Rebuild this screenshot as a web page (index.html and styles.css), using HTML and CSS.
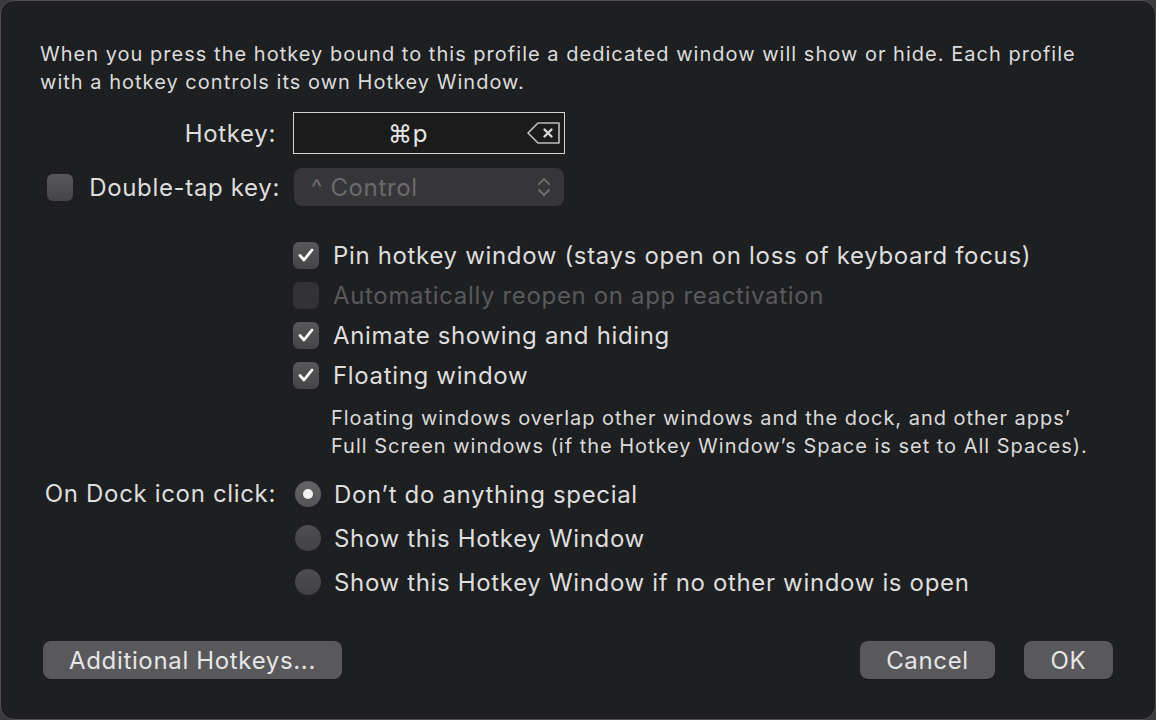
FILE: index.html
```html
<!DOCTYPE html>
<html>
<head>
<meta charset="utf-8">
<link rel="stylesheet" href="styles.css">
</head>
<body>
<div class="window">
  <p class="desc">When you press the hotkey bound to this profile a dedicated window will show or hide. Each profile with a hotkey controls its own Hotkey Window.</p>

  <div class="form">
    <div class="label">Hotkey:</div>
    <div class="ctrl">
      <div class="hotkey-field">
        <span class="hotkey-text">⌘p</span>
        <svg class="del" width="36" height="24" viewBox="0 0 36 24">
          <path d="M12 2 H33 V22 H12 L2 12 Z" fill="none" stroke="#bdbdbd" stroke-width="1.6" stroke-linejoin="round"/>
          <path d="M18.5 8.5 L25.5 15.5 M25.5 8.5 L18.5 15.5" stroke="#d8d8d8" stroke-width="2.4" stroke-linecap="round"/>
        </svg>
      </div>
    </div>

    <div class="label dt">
      <span class="box"></span>
      <span>Double-tap key:</span>
    </div>
    <div class="ctrl">
      <div class="popup">
        <span>^ Control</span>
        <svg width="16" height="24" viewBox="0 0 16 24">
          <path d="M3 9 L8 4 L13 9 M3 15 L8 20 L13 15" fill="none" stroke="#6c6c6e" stroke-width="2" stroke-linecap="round" stroke-linejoin="round"/>
        </svg>
      </div>
    </div>
  </div>

  <div class="checks">
    <div class="check-row"><span class="box on"><svg width="18" height="16" viewBox="0 0 18 16"><path d="M3 8.5 L7 13 L15 3" fill="none" stroke="#fff" stroke-width="2.8" stroke-linecap="round" stroke-linejoin="round"/></svg></span><span>Pin hotkey window (stays open on loss of keyboard focus)</span></div>
    <div class="check-row disabled"><span class="box off"></span><span>Automatically reopen on app reactivation</span></div>
    <div class="check-row"><span class="box on"><svg width="18" height="16" viewBox="0 0 18 16"><path d="M3 8.5 L7 13 L15 3" fill="none" stroke="#fff" stroke-width="2.8" stroke-linecap="round" stroke-linejoin="round"/></svg></span><span>Animate showing and hiding</span></div>
    <div class="check-row"><span class="box on"><svg width="18" height="16" viewBox="0 0 18 16"><path d="M3 8.5 L7 13 L15 3" fill="none" stroke="#fff" stroke-width="2.8" stroke-linecap="round" stroke-linejoin="round"/></svg></span><span>Floating window</span></div>
    <p class="note">Floating windows overlap other windows and the dock, and other apps’<br>Full Screen windows (if the Hotkey Window’s Space is set to All Spaces).</p>
  </div>

  <div class="dock">
    <div class="label">On Dock icon click:</div>
    <div class="radios">
      <div class="radio-row"><span class="radio sel"></span><span>Don’t do anything special</span></div>
      <div class="radio-row"><span class="radio"></span><span>Show this Hotkey Window</span></div>
      <div class="radio-row"><span class="radio"></span><span>Show this Hotkey Window if no other window is open</span></div>
    </div>
  </div>

  <div class="buttons">
    <button class="btn add">Additional Hotkeys...</button>
    <div class="spacer"></div>
    <button class="btn cancel">Cancel</button>
    <button class="btn ok">OK</button>
  </div>
</div>
</body>
</html>
```

FILE: styles.css
```css
* { box-sizing: border-box; }
html, body { margin: 0; padding: 0; }
body {
  width: 1156px;
  height: 720px;
  background: #3c3c3e;
  font-family: Inter, "Noto Sans", sans-serif;
  color: #dedede;
  overflow: hidden;
}
.window {
  width: 1156px;
  height: 720px;
  background: #1e1f21;
  border: 1px solid #4e4e50;
  border-radius: 14px;
  padding: 39px 42px 0 39px;
  display: flex;
  flex-direction: column;
  letter-spacing: 0.66px;
}
.desc {
  margin: 0;
  width: 1070px;
  font-size: 20px;
  line-height: 28px;
  letter-spacing: 1.02px;
  color: #dcdcdc;
}
.form {
  margin-top: 16px;
  display: grid;
  grid-template-columns: 236px 1fr;
  column-gap: 17px;
  row-gap: 14px;
  align-items: center;
  font-size: 24px;
}
.label {
  text-align: right;
  font-size: 24px;
}
.label.dt {
  display: flex;
  align-items: center;
  justify-content: space-between;
  margin-right: -4px;
  padding-left: 7px;
}
.hotkey-field {
  width: 272px;
  height: 42px;
  border: 1.5px solid #d2d2d2;
  background: #1b1b1c;
  display: flex;
  align-items: center;
  position: relative;
}
.hotkey-text {
  width: 228px;
  text-align: center;
  font-size: 24px;
  color: #e6e6e6;
}
.del { margin-left: 4px; }
.popup {
  width: 270px;
  height: 38px;
  margin-left: 1px;
  background: #363638;
  border-radius: 8px;
  display: flex;
  align-items: center;
  justify-content: space-between;
  padding: 0 12px 0 17px;
  color: #6b6b6d;
  font-size: 24px;
}
.box {
  width: 26px;
  height: 27px;
  border-radius: 6px;
  background: linear-gradient(#58585a, #454547);
  display: inline-flex;
  align-items: center;
  justify-content: center;
  flex: none;
}
.box.off { background: #333335; }
.checks {
  margin-top: 29px;
  padding-left: 253px;
  font-size: 24px;
}
.check-row {
  height: 40px;
  display: flex;
  align-items: center;
  gap: 14px;
}
.check-row.disabled { color: #59595b; }
.note {
  margin: 9px 0 0 38px;
  font-size: 20px;
  line-height: 28px;
  letter-spacing: 0.98px;
  white-space: nowrap;
  color: #dadada;
}
.dock {
  margin-top: 12px;
  display: grid;
  grid-template-columns: 236px 1fr;
  column-gap: 17px;
  font-size: 24px;
}
.dock .label {
  height: 44px;
  line-height: 44px;
}
.radio-row {
  height: 44px;
  display: flex;
  align-items: center;
  gap: 13px;
  padding-left: 2px;
}
.radio {
  width: 26px;
  height: 26px;
  border-radius: 50%;
  background: linear-gradient(#4e4e50, #424244);
  flex: none;
  display: inline-flex;
  align-items: center;
  justify-content: center;
}
.radio.sel { background: linear-gradient(#646466, #555557); }
.radio.sel::after {
  content: "";
  width: 10px;
  height: 10px;
  border-radius: 50%;
  background: #f2f2f2;
}
.buttons {
  margin-top: 37px;
  display: flex;
  align-items: center;
  padding-left: 3px;
}
.spacer { flex: 1; }
.btn {
  height: 38px;
  border: none;
  border-radius: 8px;
  background: #59595b;
  color: #e6e6e6;
  font-family: Inter, "Noto Sans", sans-serif;
  font-size: 24px;
  letter-spacing: 0.66px;
  padding: 0;
  box-shadow: 0 1px 0 rgba(0,0,0,0.25);
}
.add { width: 299px; }
.cancel { width: 135px; }
.ok { width: 89px; margin-left: 29px; }
```
